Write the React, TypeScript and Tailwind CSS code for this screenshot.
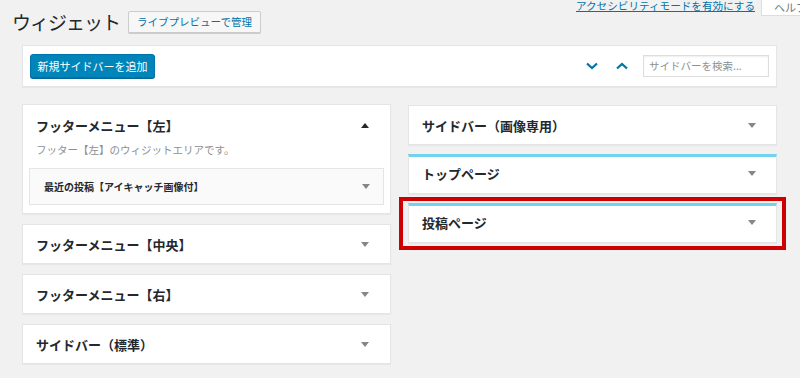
const jp = { fontFamily: '"Noto Sans CJK JP", "Noto Sans", sans-serif' };

function Arrow({ up = false, dark = false }: { up?: boolean; dark?: boolean }) {
  return (
    <svg width="8" height="5" viewBox="0 0 8 5" className="shrink-0">
      {up ? (
        <polygon points="0,5 8,5 4,0" fill={dark ? '#23282d' : '#82878c'} />
      ) : (
        <polygon points="0,0 8,0 4,5" fill={dark ? '#23282d' : '#82878c'} />
      )}
    </svg>
  );
}

function SidebarCard({
  title,
  accent = false,
  arrowRight = 21,
}: {
  title: string;
  accent?: boolean;
  arrowRight?: number;
}) {
  return (
    <div
      className={`bg-white border border-[#e5e5e5] shadow-[0_1px_1px_rgba(0,0,0,0.04)] h-[40px] flex items-center justify-between pl-[13px] ${
        accent ? 'border-t-[3px] border-t-[#74d3ec] pb-[3px]' : ''
      }`}
      style={{ paddingRight: arrowRight }}
    >
      <h2 className="text-[13px] font-bold text-[#23282d] leading-none">{title}</h2>
      <Arrow />
    </div>
  );
}

export default function App() {
  return (
    <div className="w-[800px] h-[378px] overflow-hidden bg-[#f1f1f1] relative" style={jp}>
      {/* Top row: title + screen meta links */}
      <div className="flex justify-between items-start">
        <div className="flex items-center gap-[8px] pl-[12px] pt-[11px]">
          <h1 className="text-[19px] tracking-[-1px] leading-[22px] text-[#23282d] font-normal">ウィジェット</h1>
          <button className="h-[22px] px-[8px] bg-[#f7f7f7] border border-[#cccccc] rounded-[2px] text-[10.5px] text-[#0073aa] leading-none shadow-[0_1px_0_#ccc]">
            ライブプレビューで管理
          </button>
        </div>
        <div className="flex items-start -mr-[21px]">
          <a className="text-[10.6px] text-[#0073aa] underline leading-[12px] mr-[6px]">
            アクセシビリティモードを有効にする
          </a>
          <div className="h-[16px] w-[60px] bg-white border border-[#dddddd] border-t-0 pl-[12px] text-[11px] text-[#72777c] leading-[14px] whitespace-nowrap shrink-0">
            ヘルプ
          </div>
        </div>
      </div>

      {/* Toolbar */}
      <div className="ml-[22px] mt-[12px] w-[755px] h-[42px] bg-white border border-[#e5e5e5] shadow-[0_1px_1px_rgba(0,0,0,0.04)] flex items-center justify-between px-[7px]">
        <button className="h-[24px] w-[125px] bg-[#0085ba] border border-[#0073aa] rounded-[3px] text-white text-[11px] leading-none shadow-[0_1px_0_#006799]">
          新規サイドバーを追加
        </button>
        <div className="flex items-center">
          <svg width="12" height="8" viewBox="0 0 12 8" className="mr-[18px]">
            <polyline points="1,1.5 6,6 11,1.5" fill="none" stroke="#0073aa" strokeWidth="2.2" />
          </svg>
          <svg width="12" height="8" viewBox="0 0 12 8" className="mr-[15px]">
            <polyline points="1,6.5 6,2 11,6.5" fill="none" stroke="#0073aa" strokeWidth="2.2" />
          </svg>
          <div className="w-[126px] h-[22px] border border-[#dddddd] shadow-[inset_0_1px_2px_rgba(0,0,0,0.07)] flex items-center pl-[5px] text-[10.5px] text-[#8c8f94]">
            サイドバーを検索...
          </div>
        </div>
      </div>

      {/* Columns */}
      <div className="flex gap-[17px] ml-[22px] mt-[17px]">
        {/* Left column */}
        <div className="w-[369px] flex flex-col gap-[10px]">
          <div className="bg-white border border-[#e5e5e5] shadow-[0_1px_1px_rgba(0,0,0,0.04)] h-[110px] flex flex-col">
            <div className="h-[40px] flex items-center justify-between pl-[13px] pr-[21px] shrink-0">
              <h2 className="text-[13px] font-bold text-[#23282d] leading-none">フッターメニュー【左】</h2>
              <Arrow up dark />
            </div>
            <p className="pl-[13px] text-[10.5px] text-[#8c8f94] leading-[16px] -mt-[3px]">
              フッター【左】のウィジットエリアです。
            </p>
            <div className="mx-[6px] mt-[10px] h-[37px] bg-[#fafafa] border border-[#e5e5e5] flex items-center justify-between pl-[14px] pr-[13px]">
              <h3 className="text-[10px] font-bold text-[#23282d] leading-none">最近の投稿【アイキャッチ画像付】</h3>
              <Arrow />
            </div>
          </div>
          <SidebarCard title="フッターメニュー【中央】" />
          <SidebarCard title="フッターメニュー【右】" />
          <SidebarCard title="サイドバー（標準）" />
        </div>

        {/* Right column */}
        <div className="w-[369px] flex flex-col gap-[9px] mt-[1px]">
          <SidebarCard title="サイドバー（画像専用）" arrowRight={20} />
          <SidebarCard title="トップページ" accent arrowRight={20} />
          <div className="relative">
            <SidebarCard title="投稿ページ" accent arrowRight={20} />
            <div className="absolute -left-[9px] -right-[9px] -top-[6px] -bottom-[7px] border-4 border-[#cc0000] pointer-events-none" />
          </div>
        </div>
      </div>
    </div>
  );
}
